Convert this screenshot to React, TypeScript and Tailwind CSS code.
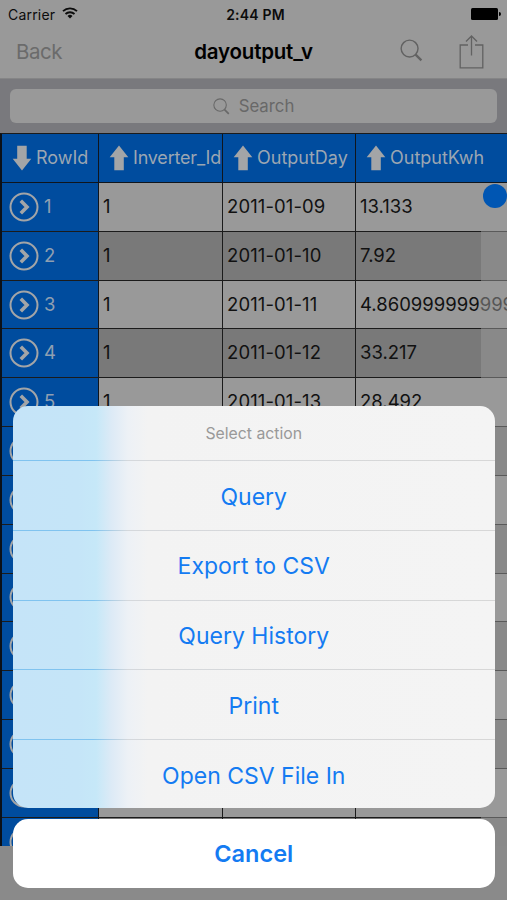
const columns = [
  { name: "RowId", width: "w-[97px]", pad: "pl-[10px]", down: true },
  { name: "Inverter_Id", width: "w-[124px]", pad: "pl-[10px]" },
  { name: "OutputDay", width: "w-[133px]", pad: "pl-[10px]" },
  { name: "OutputKwh", width: "w-[153px]", pad: "pl-[10px]" },
];

const rows = [
  ["1", "2011-01-09", "13.133"],
  ["1", "2011-01-10", "7.92"],
  ["1", "2011-01-11", "4.86099999999999"],
  ["1", "2011-01-12", "33.217"],
  ["1", "2011-01-13", "28.492"],
  ...Array.from({ length: 9 }, () => ["", "", ""]),
];

const actions = ["Query", "Export to CSV", "Query History", "Print", "Open CSV File In"];

function Arrow({ down }: { down?: boolean }) {
  return (
    <svg viewBox="0 0 20 26" className={`h-[26px] w-5 shrink-0 fill-[#a3a5a7] ${down ? "rotate-180" : ""}`}>
      <path d="M10 0.5 19.3 12.3H14.8V25.3H5.3V12.3H0.7Z" />
    </svg>
  );
}

function SearchIcon({ className }: { className: string }) {
  return (
    <svg viewBox="0 0 24 24" fill="none" stroke="currentColor" className={className}>
      <circle cx="10" cy="10" r="8.8" strokeWidth="1.5" />
      <path d="m16.3 16.3 6 6" strokeWidth="2.4" />
    </svg>
  );
}

function StatusBar() {
  return (
    <div className="grid h-7 grid-cols-3 items-center pl-[8px] pr-[6px] text-[14px] text-[#0c0c0c]">
      <div className="flex items-center gap-[7px]">
        <span className="tracking-[0.2px]">Carrier</span>
        <svg viewBox="0 0 16 12" className="mb-[2px] h-3 w-4" fill="none" stroke="currentColor" strokeWidth="1.8">
          <path d="M1 4.2a10.2 10.2 0 0 1 14 0M3.5 7a6.6 6.6 0 0 1 9 0" />
          <path d="M8 11.5 5.5 9a3.6 3.6 0 0 1 5 0Z" fill="currentColor" stroke="none" />
        </svg>
      </div>
      <span className="pl-[2px] text-center text-[14px] font-semibold tracking-[0.2px]">2:44 PM</span>
      <svg viewBox="0 0 30 12" className="h-3 w-[30px] justify-self-end">
        <rect width="27" height="12" rx="1.5" />
        <path d="M28 4a2 2 0 0 1 0 4Z" />
      </svg>
    </div>
  );
}

function NavBar() {
  return (
    <div className="grid h-[51px] grid-cols-[1fr_auto_1fr] items-center border-b border-[#858586] pb-[2px] pl-[16px] pr-[23px]">
      <span className="text-[20.5px] tracking-[-0.5px] text-[#6b6b6b]">Back</span>
      <h1 className="pl-[7px] text-[20.5px] font-semibold tracking-[-0.2px]">dayoutput_v</h1>
      <div className="flex items-center justify-end gap-[36px] text-[#626262]">
        <SearchIcon className="mb-[3px] h-[23px] w-[23px]" />
        <svg viewBox="0 0 25 34" fill="none" stroke="currentColor" strokeWidth="1.3" className="h-[34px] w-[25px]">
          <path d="M9 10H1.2V32.8H23.8V10H16M12.5 20.5V1.2M7 6.5 12.5 1 18 6.5" />
        </svg>
      </div>
    </div>
  );
}

function HeaderRow() {
  return (
    <div className="flex h-[49px] shrink-0 border-b border-[#10151c] bg-[#004c9e] text-[#9ba6b2]">
      {columns.map((col, i) => (
        <div
          key={col.name}
          className={`flex shrink-0 items-center gap-[4px] overflow-hidden ${col.width} ${col.pad} ${i < 3 ? "border-r border-[#10151c]" : ""}`}
        >
          <Arrow down={col.down} />
          <span className={`pb-[2px] text-[18px] ${i === 1 ? "tracking-[-0.2px]" : ""}`}>{col.name}</span>
        </div>
      ))}
    </div>
  );
}

function DataRow({ cells, index }: { cells: string[]; index: number }) {
  return (
    <div
      className={`flex h-[48.82px] shrink-0 border-[#1b1b1b] text-[18.5px] text-[#111] ${index % 2 ? "bg-[#797979]" : "bg-[#999]"} ${index < 13 ? "border-b" : ""}`}
    >
      <div className="flex w-[97px] shrink-0 items-center gap-[5px] border-r border-[#10151c] bg-[#004c9e] pl-[7px] text-[#8f9fb1]">
        <svg viewBox="0 0 30 30" fill="none" className="h-[30px] w-[30px] stroke-[#a3a5a7]">
          <circle cx="15" cy="15" r="13.5" strokeWidth="2" />
          <path d="m11.8 8.8 6.2 6.2-6.2 6.2" strokeWidth="3.6" />
        </svg>
        {index < 5 && <span>{index + 1}</span>}
      </div>
      <div className="flex w-[124px] shrink-0 items-center border-r border-[#1b1b1b] pl-1">{cells[0]}</div>
      <div className="flex w-[133px] shrink-0 items-center border-r border-[#1b1b1b] pl-1 tracking-[0.1px]">{cells[1]}</div>
      <div className="flex w-[151px] items-center overflow-hidden pl-1">{cells[2]}</div>
    </div>
  );
}

function ActionSheet() {
  return (
    <div className="absolute left-[13px] right-[12.5px] top-[406px] text-center text-[#147bf2]">
      <div className="h-[402px] overflow-hidden rounded-[15px] bg-[linear-gradient(90deg,#c5e4f8_0px,#c5e5f8_65px,#c6e8f8_83px,#dceaf6_98px,#edf1f6_115px,#f3f3f3_135px,#f4f4f4_100%)]">
        <div className="flex h-[54px] items-center justify-center pt-[2px] text-[15.8px] text-[#999]">Select action</div>
        {actions.map((action) => (
          <div key={action} className="h-[69.8px]">
            <div className="h-px bg-[linear-gradient(90deg,#80c3ef_0px,#80c3ef_80px,#d5d8dc_115px,#d7d7d7_100%)]" />
            <button className="h-[68.7px] w-full pt-[3px] text-[23px]">{action}</button>
          </div>
        ))}
      </div>
      <button className="mt-[10.5px] h-[69.5px] w-full rounded-[15px] bg-white pt-px text-[23.5px] font-semibold">Cancel</button>
    </div>
  );
}

export default function App() {
  return (
    <div className="relative flex h-[900px] w-[507px] flex-col overflow-hidden bg-[#8a8a8a] font-[Inter,sans-serif] text-black">
      <div className="bg-[#999]">
        <StatusBar />
        <NavBar />
      </div>
      <div className="h-[54px] bg-[#79797d] px-[10px] pt-[10px]">
        <div className="flex h-[34px] items-center justify-center gap-[9px] rounded-[6px] bg-[#999] text-[#686868]">
          <SearchIcon className="h-[17px] w-[17px]" />
          <span className="pt-px text-[16.8px]">Search</span>
        </div>
      </div>
      <div className="relative flex h-[713px] flex-col overflow-hidden border-l-2 border-t border-l-[#0b1017] border-t-[#1b1b1b]">
        <HeaderRow />
        {rows.map((cells, i) => (
          <DataRow key={i} cells={cells} index={i} />
        ))}
        <div className="absolute bottom-0 right-0 top-[49px] w-[26px] bg-[#999]/50" />
        <div className="absolute right-0 top-[50px] h-6 w-6 rounded-full bg-[#0056b3]" />
      </div>
      <ActionSheet />
    </div>
  );
}
